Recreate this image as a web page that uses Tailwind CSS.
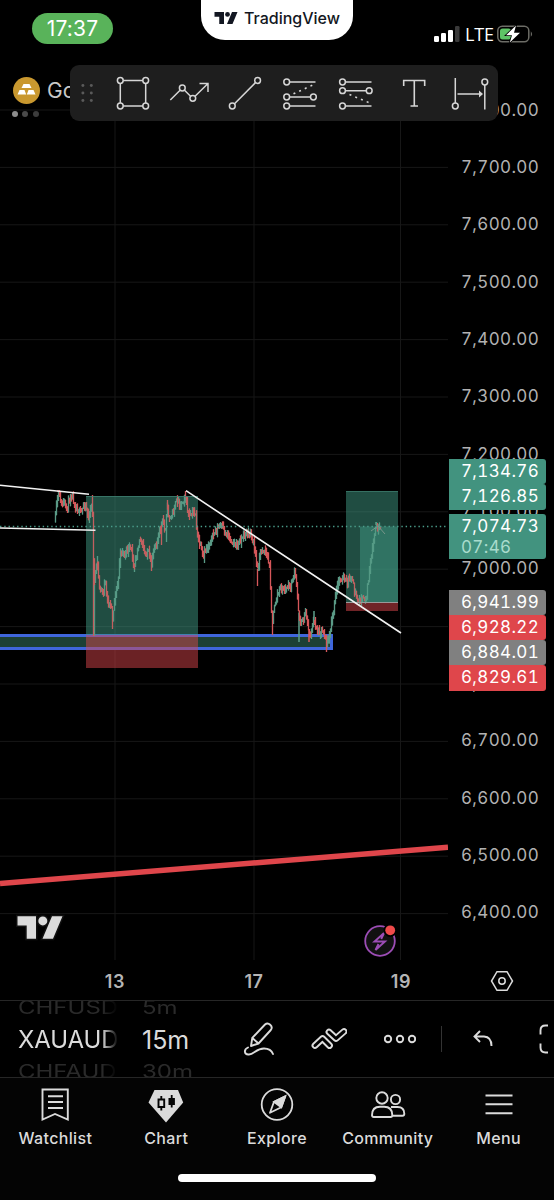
<!DOCTYPE html>
<html lang="en">
<head>
  <meta charset="UTF-8" />
  <meta name="viewport" content="width=device-width, initial-scale=1.0"/>
  <title>TradingView | XAUAUD</title>
  <script src="https://cdn.jsdelivr.net/npm/@tailwindcss/browser@4"></script>
</head>
<body class="bg-black font-['Inter','Liberation_Sans',sans-serif] text-[#dbdbdb]">
  <div class="relative flex flex-col w-[554px] h-[1200px] overflow-hidden">

    <!-- Status bar -->
    <header class="flex justify-between h-[66px] shrink-0 pl-8 pr-[21px]">
      <div class="mt-[13px] w-[81px] h-[31px] rounded-full bg-[#59b35a] text-white text-[21px] leading-[32px] tracking-[0.200px] text-center">17:37</div>
      <div class="flex items-center justify-center gap-[6px] w-[152px] h-10 ml-[7px] pb-1 rounded-b-[24px] bg-white text-[#131722]">
        <svg class="w-6 h-3" viewBox="0 0 46 24" fill="currentColor"><path d="M0 0h19v24h-9.5V9.5H0zM35 0h11L36 24H25z"/><circle cx="26" cy="4.8" r="4.8"/></svg>
        <span class="text-[16px] font-medium">TradingView</span>
      </div>
      <div class="flex items-center h-10 mt-[14px] w-[99px]">
        <svg class="w-[26px] h-4" viewBox="0 0 26 16" fill="#fff"><rect x="0" y="10" width="5" height="6" rx="1.3"/><rect x="7" y="7" width="5" height="9" rx="1.3"/><rect x="14" y="4" width="5" height="12" rx="1.3"/><rect x="21" y="0" width="4.5" height="16" rx="1.3" fill="#3a3a3a"/></svg>
        <span class="ml-[5px] w-7 text-[18px] leading-none font-['Open_Sans',sans-serif] text-white tracking-[-0.200px]">LTE</span>
        <svg class="ml-1 w-9 h-[18px] shrink-0" viewBox="0 0 36 18"><rect x=".8" y="1.2" width="31" height="15.6" rx="4.5" fill="none" stroke="#6c6c66" stroke-width="1.5"/><path d="M33.8 6.2q2.6 2.8 0 5.6z" fill="#6c6c66"/><rect x="3" y="3.5" width="11" height="11" rx="2.5" fill="#5ec466"/><path d="M19 .5L9 10.3h6L12.8 17.5 23 7.8h-6z" fill="#fff" stroke="#000" stroke-width="1.6" paint-order="stroke"/></svg>
      </div>
    </header>

    <!-- Chart -->
    <main class="relative flex h-[896px] shrink-0">
      <svg id="chart" class="w-[448px] h-[896px]" viewBox="0 66 448 896" fill="none">
        <g id="grid" stroke="#171717" stroke-width="1"></g>
        <rect x="-5" y="635.5" width="336.5" height="13" fill="#1c4035" stroke="#3f66dc" stroke-width="3"/>
        <g id="candles" stroke-width="1.200"></g>
        <rect x="86" y="496" width="112" height="139" fill="#3f9984" fill-opacity=".5"/>
        <rect x="86" y="635" width="112" height="33" fill="#e0484e" fill-opacity=".48"/>
        <rect x="346" y="491.300" width="52" height="111" fill="#3f9984" fill-opacity=".5"/>
        <rect x="360" y="526.500" width="38" height="76" fill="#3f9984" fill-opacity=".5"/>
        <rect x="346" y="602.500" width="52" height="8.500" fill="#e0484e" fill-opacity=".5"/>
        <g id="candles-top" stroke-width="1.200" opacity=".75"></g>
        <path d="M86 496.500h112M346 491.500h52" stroke="#3f7f70" stroke-width=".8"/>
        <path d="M346 602.500h52" stroke="#999" stroke-width="1.200"/>
        <path d="M371 531l7-5 7 8" stroke="#77968a" stroke-width="1"/>
        <path d="M0 526.500H446" stroke="#4b9e8b" stroke-width="1.400" stroke-dasharray="1.400 2.870"/>
        <path d="M0 485.300L89 494.200M0 528L95.500 530.200M186 490.700L401 633" stroke="#f2f2f2" stroke-width="1.600"/>
        <path d="M0 883.500L448 847.300" stroke="#df464b" stroke-width="5.600"/>
        <g transform="translate(17.500 916.300)" fill="#dbdbdb" stroke="#111" stroke-width="3" paint-order="stroke"><path d="M0 0h18.500v22.500H9.200V9.300H0zM34.500 0H45L35.500 22.500H25z"/><circle cx="25.300" cy="4.600" r="4.500"/></g>
        <circle cx="380" cy="941" r="14.800" fill="#111" stroke="#9c4db5" stroke-width="1.800"/>
        <path d="M384 933l-9.500 8.500h10.500l-9.500 8.500 3-6M384 933l-2.800 6" stroke="#9c4db5" stroke-width="1.900"/>
        <circle cx="390.200" cy="930.300" r="4.900" fill="#ef4a4a" stroke="#000" stroke-width="3.500" paint-order="stroke"/>
      </svg>

      <!-- Price scale -->
      <div id="scale" class="w-[106px] pt-[15.500px] pl-[13px] text-[17px] tracking-[0.350px] tabular-nums text-[#b2b2b2] whitespace-nowrap"></div>
      <div class="absolute left-[449px] top-[393px] w-[97px] text-[17px] tracking-[0.350px] tabular-nums leading-[25px] text-white whitespace-nowrap">
        <div class="h-[25px] pl-3 rounded-r-[3px] bg-[#42937f]">7,134.76</div>
        <div class="h-[25.500px] pl-3 rounded-r-[3px] bg-[#42937f]">7,126.85</div>
        <div class="h-[45px] mt-[4.500px] pl-3 pt-[2px] rounded-r-[3px] bg-[#42937f] leading-[21px]">7,074.73<br><span class="text-[#a9dccd]">07:46</span></div>
        <div class="h-[25px] mt-[31px] pl-3 rounded-r-[3px] bg-[#808080]">6,941.99</div>
        <div class="h-[25px] pl-3 rounded-r-[3px] bg-[#df464b]">6,928.22</div>
        <div class="h-[25px] pl-3 rounded-r-[3px] bg-[#808080]">6,884.01</div>
        <div class="h-[25.500px] pl-3 rounded-r-[3px] bg-[#df464b]">6,829.61</div>
      </div>

      <!-- Symbol -->
      <div class="absolute left-[13px] top-[11px]">
        <div class="flex items-center gap-[7px] h-[27px]">
          <svg class="w-[27px] h-[27px]" viewBox="0 0 27 27"><circle cx="13.500" cy="13.500" r="13.500" fill="#c9982f"/><path d="M10.500 7h6l2 4h-10zM6.500 13h5l1.700 4.500H4.500zM15.500 13h5l2 4.500h-8.700z" fill="#fff"/></svg>
          <span class="text-[21px] text-[#c8c8c8]">Gold</span>
        </div>
        <div class="flex gap-[4.500px] mt-[7px] -ml-[1.500px]">
          <i class="size-[6px] rounded-full bg-[#8d8d8d]"></i>
          <i class="size-[6px] rounded-full bg-[#4a4a4a]"></i>
          <i class="size-[6px] rounded-full bg-[#3c3c3c]"></i>
        </div>
      </div>

      <!-- Favourite drawing tools -->
      <div class="absolute left-[70px] top-[-1px] flex w-[428px] h-14 rounded-[9px] bg-[#1e1e1e]">
        <svg class="w-[35px] h-14" viewBox="0 0 35 56" fill="#5a5a5a"><circle cx="13" cy="20.500" r="1.500"/><circle cx="21.500" cy="20.500" r="1.500"/><circle cx="13" cy="28" r="1.500"/><circle cx="21.500" cy="28" r="1.500"/><circle cx="13" cy="35.500" r="1.500"/><circle cx="21.500" cy="35.500" r="1.500"/></svg>
        <div class="flex text-[#d6d6d6] [&>svg]:w-[56.200px] [&>svg]:h-14">
          <svg viewBox="0 0 56.200 56" fill="#1e1e1e" stroke="currentColor" stroke-width="1.500"><path d="M15.300 15.500h25.400V41H15.300z"/><circle cx="15.300" cy="15.500" r="2.900"/><circle cx="40.700" cy="15.500" r="2.900"/><circle cx="15.300" cy="41" r="2.900"/><circle cx="40.700" cy="41" r="2.900"/></svg>
          <svg viewBox="0 0 56.200 56" fill="#1e1e1e" stroke="currentColor" stroke-width="1.500"><path fill="none" d="M9.300 35l12-12 10.500 10.500L47 18.500M38.500 18.500H47v8.500"/><circle cx="21.300" cy="23" r="2.900"/><circle cx="31.800" cy="33.300" r="2.900"/></svg>
          <svg viewBox="0 0 56.200 56" fill="#1e1e1e" stroke="currentColor" stroke-width="1.500"><path d="M15.300 41l25.300-25.500"/><circle cx="15.300" cy="41" r="2.900"/><circle cx="40.600" cy="15.500" r="2.900"/></svg>
          <svg viewBox="0 0 56.200 56" fill="#1e1e1e" stroke="currentColor" stroke-width="1.500"><path d="M14 17h28.500M14 32h26M14 41h28.500"/><path d="M20.500 28.800L41 19.500" stroke-dasharray="2 4.200" stroke-width="1.600"/><circle cx="13.700" cy="17" r="2.900"/><circle cx="13.700" cy="32" r="2.900"/><circle cx="40.400" cy="32" r="2.900"/><circle cx="13.700" cy="41" r="2.900"/></svg>
          <svg viewBox="0 0 56.200 56" fill="#1e1e1e" stroke="currentColor" stroke-width="1.500"><path d="M14 17h28.500M14 25.700h26M14 41h28.500"/><path d="M20.500 29.500L41 38" stroke-dasharray="2 4.200" stroke-width="1.600"/><circle cx="13.500" cy="17" r="2.900"/><circle cx="13.500" cy="25.700" r="2.900"/><circle cx="40.200" cy="25.700" r="2.900"/><circle cx="13.500" cy="41" r="2.900"/></svg>
          <svg viewBox="0 0 56.200 56" fill="none" stroke="currentColor" stroke-width="1.600"><path d="M17.700 21v-5.500h21V21M28.300 15.500V41M24.500 41h7.500"/></svg>
          <svg viewBox="0 0 56.200 56" fill="#1e1e1e" stroke="currentColor" stroke-width="1.500"><path d="M13.300 13v25M42.800 20v24.500M15.500 29h22"/><path d="M37 25.500l4 3.500-4 3.500z" fill="currentColor" stroke="none"/><circle cx="13.300" cy="41" r="2.900"/><circle cx="42.800" cy="17" r="2.900"/></svg>
        </div>
      </div>
    </main>

    <!-- Time scale -->
    <div class="flex items-center h-[38px] shrink-0 text-[18px] font-semibold tracking-[0.600px] text-[#b5b5b5] text-center">
      <span class="w-10 ml-[95px]">13</span>
      <span class="w-10 ml-[99px]">17</span>
      <span class="w-10 ml-[107px]">19</span>
      <svg class="w-6 h-6 ml-[69px]" viewBox="0 0 24 24" fill="none" stroke="#dbdbdb" stroke-width="1.500"><path d="M7 2.700h10L22.500 12 17 21.300H7L1.500 12z"/><circle cx="12" cy="12" r="3.200"/></svg>
    </div>

    <!-- Bottom toolbar -->
    <div class="flex items-center h-[77px] shrink-0 border-t border-[#262626] overflow-hidden">
      <div class="flex flex-col items-start justify-center gap-[4px] w-[100px] ml-[18px] pt-[2px] shrink-0 text-[24px] leading-7 overflow-hidden whitespace-nowrap mask-r-from-84% mask-r-to-100%">
        <span class="text-[#2a2a2a] scale-y-75">CHFUSD</span>
        <span class="tracking-[-0.100px]">XAUAUD</span>
        <span class="text-[#2a2a2a] scale-y-75">CHFAUD</span>
      </div>
      <div class="flex flex-col items-start justify-center gap-[4px] w-[101px] ml-[24px] pt-[2px] shrink-0 text-[24px] leading-7">
        <span class="text-[#2a2a2a] scale-y-75">5m</span>
        <span class="text-[25px]">15m</span>
        <span class="text-[#2a2a2a] scale-y-75">30m</span>
      </div>
      <svg class="w-8 h-9 shrink-0" viewBox="0 0 32 36" fill="none" stroke="currentColor" stroke-width="1.900" stroke-linecap="round" stroke-linejoin="round"><path d="M8 25l1.300-8.200L22 3.500q2.500-2.300 5.200.2t.6 5.300L15.500 22.500zM9.300 17l6.200 5.500"/><path d="M5 26.500C.5 28.500 1 34 6 33.500c5-.5 7.500-6 15-6 4.500 0 7.500 1.500 9 5.500"/></svg>
      <svg class="w-9 h-7 ml-[36px] shrink-0" viewBox="0 0 36 28" fill="none" stroke-linecap="round" stroke-linejoin="round"><g stroke="#dbdbdb" stroke-width="6.800"><path d="M4 20.500l7.500-7 7 7M18 7l7 6.500L33 6.500"/></g><g stroke="#000" stroke-width="3"><path d="M4 20.500l7.500-7 7 7M18 7l7 6.500L33 6.500"/></g></svg>
      <svg class="w-8 h-8 ml-[37px] shrink-0" viewBox="0 0 32 32" fill="none" stroke="currentColor" stroke-width="1.900"><circle cx="4" cy="16" r="3.200"/><circle cx="16" cy="16" r="3.200"/><circle cx="28" cy="16" r="3.200"/></svg>
      <div class="w-px h-[26px] ml-[25px] shrink-0 bg-[#333]"></div>
      <svg class="w-5 h-5 ml-[31px] shrink-0" viewBox="0 0 20 20" fill="none" stroke="currentColor" stroke-width="1.900"><path d="M7 2L1.500 7.500 7 13M1.500 7.500H11q7.500.5 7.500 9.500"/></svg>
      <svg class="w-[9px] h-[30px] ml-[46px] shrink-0" viewBox="0 0 9 30" fill="none" stroke="currentColor" stroke-width="1.900"><path d="M1.500 10.500v-4q0-5 5-5h3M1.500 19.500v4q0 5 5 5h3"/></svg>
    </div>

    <!-- Tab bar -->
    <nav class="grid grid-cols-5 h-[123px] shrink-0 border-t border-[#262626] bg-[#040404] pt-[9px] text-[16px] font-medium tracking-[0.350px] [&>div]:flex [&>div]:flex-col [&>div]:items-center [&_svg]:w-9 [&_svg]:h-9">
      <div>
        <svg viewBox="0 0 36 36" fill="none" stroke="currentColor" stroke-width="1.900"><path d="M5.500 2.500h25.300v30L18 27 5.500 32.500zM11 9.200h15M11 15h15M11 21h15"/></svg>
        <span class="mt-[3px]">Watchlist</span>
      </div>
      <div>
        <svg viewBox="0 0 36 36"><path d="M6.500 3h23.500l5.200 12.500L18 35.500.500 15.500z" fill="#dbdbdb"/><path d="M13.300 9v3.500M13.300 20v3.500M10.500 12.500h5.700V20h-5.700z" fill="none" stroke="#050505" stroke-width="1.900"/><path d="M20.500 11h2.300V8h1.800v3h2.300v7h-2.300v2.500h-1.800V18h-2.300z" fill="#050505"/></svg>
        <span class="mt-[3px]">Chart</span>
      </div>
      <div>
        <svg viewBox="0 0 36 36" fill="none" stroke="currentColor" stroke-width="1.800"><circle cx="18" cy="17.500" r="15.300"/><path d="M26.300 9.300l-4 11-11.300 5.500 4-11z" stroke-linejoin="round"/><path d="M26.300 9.300l-4 11-7.300-5.500z" fill="currentColor"/></svg>
        <span class="mt-[3px]">Explore</span>
      </div>
      <div>
        <svg viewBox="0 0 36 36" fill="none" stroke="currentColor" stroke-width="1.900"><circle cx="12" cy="11" r="5.700"/><circle cx="25.500" cy="12.500" r="4.600"/><path d="M2 28.300q0-8.500 8-8.500h4q8.300 0 8.300 8.500 0 1.700-1.700 1.700H3.700Q2 30 2 28.300zM21 20h6.500q6.800 0 6.800 6.700 0 2-1.800 2h-10"/></svg>
        <span class="mt-[3px]">Community</span>
      </div>
      <div>
        <svg viewBox="0 0 36 36" fill="none" stroke="currentColor" stroke-width="1.900"><path d="M4.500 8.500h27M4.500 17.300h27M4.500 26.200h27"/></svg>
        <span class="mt-[3px]">Menu</span>
      </div>
      <div class="col-span-5"><i class="w-[198px] h-2 mt-[5px] rounded-full bg-white"></i></div>
    </nav>
  </div>

  <script>
    const NS = 'http://www.w3.org/2000/svg';

    // price scale, 7,800 down to 6,400
    const scale = document.getElementById('scale');
    for (let p = 7800; p >= 6400; p -= 100) {
      const row = document.createElement('div');
      row.className = 'h-[57.350px] leading-[57.350px]';
      row.textContent = p.toLocaleString('en-US') + '.00';
      scale.appendChild(row);
    }

    let grid = '';
    for (let i = 0; i < 15; i++) grid += `M0 ${110 + i * 57.4}H448`;
    for (const x of [115, 254, 400.5]) grid += `M${x} 66V960`;
    addPath('grid', grid);

    // price curve the candles follow: x, y
    const curve = [55,521,56.5,508,58,492,60,498,62,507,64,502,66,509,68,504,71,495,74,500,76,508,79,510,81,514,83,508,85,502,87,510,89,522,91,507,92,500,93,530,94,590,95,578,97,560,98,573,100,592,102,588,103,595,105,582,107,598,109,606,111,602,112.5,616,114,605,116,590,118,585,120,555,122,550,125,555,128,550,131,548,134,566,137,550,140,537,143,548,145,556,148,550,151,566,154,545,157,542,160,530,163,520,165,532,167,508,170,518,173,512,177,500,181,504,184,498,185,494,187,508,190,519,193,512,196,515,197,535,200,545,203,557,206,550,210,542,214,533,218,528,221,525,224,532,228,535,232,540,236,546,240,541,244,534,248,536,251,532,253,540,256,556,257,572,259,560,261,550,265,550,268,560,270,570,271,600,272,622,274,610,277,595,281,588,284,590,288,587,291,587,294,572,296,578,298,605,300,620,303,623,305,610,307,620,310,636,314,620,318,632,322,630,325,635,327,645,329,635,331,626,333,615,335,600,338,583,341,578,344,579,347,583,351,575,353,585,356,595,358,601,362,600,366,598,369,575,372,555,374,537,376,525,378,530,381,530];
    const wicks = [[94.5,636,'g'],[93.5,636,'r'],[112.5,629,'r'],[134.500,572,'g'],[151.500,571,'r'],[161.500,545,'r'],[166.500,542,'g'],[167.500,500,'r'],[185.500,491,'r'],[204.500,563,'g'],[257.500,586,'r'],[272.500,635,'r'],[299,642,'g'],[309,642,'r'],[326.500,652,'r'],[92.500,495,'r'],[97.500,556,'g'],[58,490,'r'],[376,522,'g'],[314,611,'g']];

    let seed = 11;
    const rnd = () => (seed = (seed * 16807) % 2147483647) / 2147483647;

    function curveY(x) {
      let i = 0;
      while (i < curve.length - 4 && curve[i + 2] < x) i += 2;
      const t = (x - curve[i]) / (curve[i + 2] - curve[i]);
      return curve[i + 1] + t * (curve[i + 3] - curve[i + 1]);
    }

    let up = '', down = '', prev = curveY(55);
    for (let x = 55.5; x < 381; x += 1) {
      const y = curveY(x) + (rnd() - .5) * 7;
      const top = Math.min(y, prev) - rnd() * 5;
      const bottom = Math.max(y, prev) + rnd() * 5;
      const seg = `M${x} ${top.toFixed(1)}V${bottom.toFixed(1)}`;
      if (y < prev) up += seg; else down += seg;
      prev = y;
    }
    for (const [x, y, c] of wicks) {
      const seg = `M${x} ${curveY(x).toFixed(1)}V${y}`;
      if (c === 'g') up += seg; else down += seg;
    }
    for (const id of ['candles', 'candles-top']) {
      addPath(id, up, '#5a9a86');
      addPath(id, down, '#d6575a');
    }

    function addPath(id, d, stroke) {
      const el = document.createElementNS(NS, 'path');
      el.setAttribute('d', d);
      if (stroke) el.setAttribute('stroke', stroke);
      document.getElementById(id).appendChild(el);
    }
  </script>
</body>
</html>
